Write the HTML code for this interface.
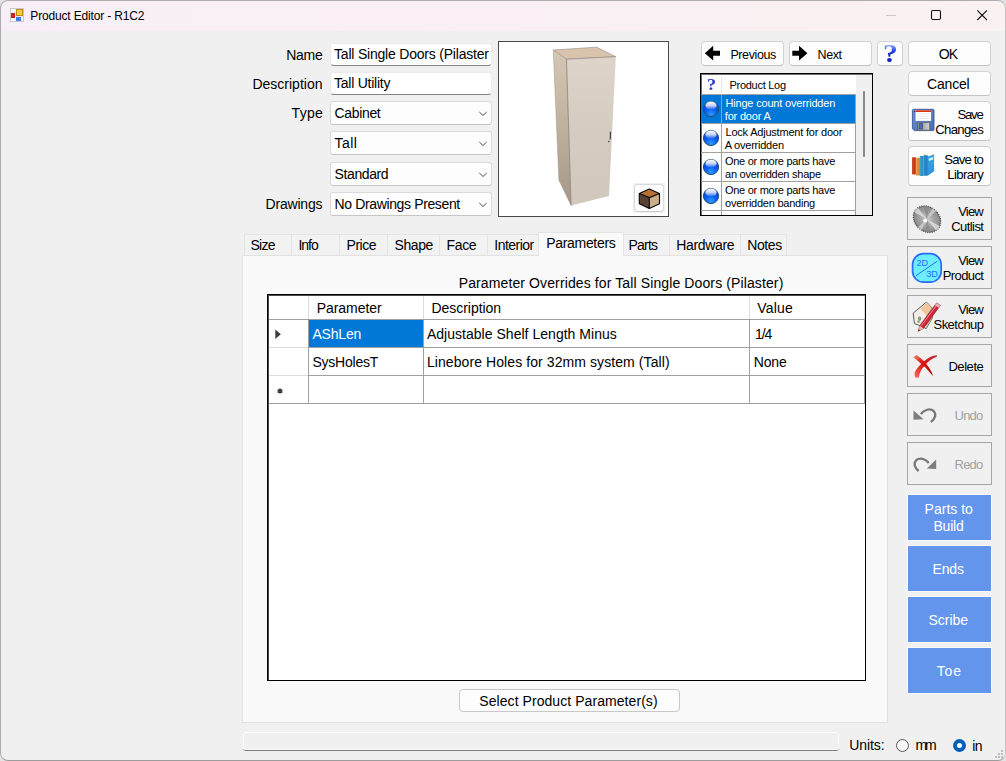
<!DOCTYPE html>
<html><head><meta charset="utf-8"><title>Product Editor - R1C2</title>
<style>
*{box-sizing:border-box;margin:0;padding:0}
html,body{width:1006px;height:761px;overflow:hidden;background:#e4e4e4}
body{font-family:"Liberation Sans",sans-serif;font-size:14px;color:#000;position:relative}
.abs{position:absolute}
.t{position:absolute;white-space:nowrap}
#win{position:absolute;left:0;top:0;width:1006px;height:761px;background:#f0f0f0;border-radius:8px;overflow:hidden}
#frame{position:absolute;left:0;top:0;width:1006px;height:761px;border:1px solid #adadad;border-right:1.5px solid #c4c4c4;border-bottom:1.5px solid #9c9c9c;border-radius:8px;pointer-events:none}
#title{position:absolute;left:0;top:0;width:1006px;height:31px;background:linear-gradient(90deg,#f8eef7 0%,#f9f0f4 60%,#faf1f1 100%)}
.tb{position:absolute;left:330px;width:162px;height:23px;background:#fff;border:1px solid #ebebeb;border-bottom:1px solid #838383;border-radius:4px;overflow:hidden}
.cb{position:absolute;left:330px;width:162px;height:24px;background:#fdfdfd;border:1px solid #dadada;border-bottom-color:#c6c6c6;border-radius:3px}
.btn{position:absolute;background:#fdfdfd;border:1px solid #d2d2d2;border-bottom-color:#c4c4c4;border-radius:4px}
.fbtn{position:absolute;left:907px;width:85px;height:43px;background:#f0f0f0;border:1px solid #a6a6a6}
.bbtn{position:absolute;left:907px;width:85px;height:47px;background:#6495ed;border:1px solid #fafafa}
.tab{position:absolute;top:234px;height:21px;background:#f2f2f2;border:1px solid #e4e4e4;border-bottom:none}
.gl{position:absolute;background:#a0a0a0}
</style></head><body>
<div id="win">
<div id="title"></div>

<span class="t" style="left:30.30px;top:7.74px;font-size:12px;line-height:16px;letter-spacing:-0.164px;">Product Editor - R1C2</span>
<svg class="abs" style="left:880px;top:5px" width="120" height="22" viewBox="0 0 120 22">
<line x1="6" y1="10.5" x2="16" y2="10.5" stroke="#cfc7cd" stroke-width="1"/>
<rect x="51.5" y="5.5" width="9" height="9" rx="1.5" fill="none" stroke="#111" stroke-width="1.1"/>
<path d="M97.3 5.3 L107 15 M107 5.3 L97.3 15" stroke="#111" stroke-width="1.1" fill="none"/>
</svg>
<svg class="abs" style="left:10px;top:8px" width="15" height="15" viewBox="0 0 15 15">
<rect x="0.5" y="0.5" width="13" height="13" fill="#f1eaf1" stroke="#c8c8c8"/><rect x="1" y="1" width="4" height="3" fill="#fff"/><rect x="1" y="11" width="4" height="2" fill="#fff"/><rect x="12" y="9" width="1" height="4" fill="#fff"/>
<rect x="1" y="5" width="4" height="5" fill="#c0281c"/>
<rect x="6.5" y="1.5" width="6" height="6" fill="#f8cc3c" stroke="#c08a10" stroke-width="1"/>
<rect x="6" y="9" width="5" height="4" fill="#3f7fe0"/>
</svg>

<span class="t" style="left:286.30px;top:46.95px;font-size:14px;line-height:16px;letter-spacing:-0.325px;">Name</span>
<span class="t" style="left:252.40px;top:75.95px;font-size:14px;line-height:16px;letter-spacing:0.010px;">Description</span>
<span class="t" style="left:291.60px;top:104.95px;font-size:14px;line-height:16px;letter-spacing:0.308px;">Type</span>
<span class="t" style="left:265.60px;top:195.65px;font-size:14px;line-height:16px;letter-spacing:-0.211px;">Drawings</span>
<div class="tb" style="top:43px"></div><div class="tb" style="top:72px"></div>
<div class="abs" style="left:331px;top:45px;width:157.6px;height:20px;overflow:hidden"><span class="t" style="left:3.00px;top:0.95px;font-size:14px;line-height:16px;letter-spacing:-0.204px;">Tall Single Doors (Pilaster)</span></div>
<span class="t" style="left:334.00px;top:74.95px;font-size:14px;line-height:16px;letter-spacing:-0.248px;">Tall Utility</span>
<div class="cb" style="top:101px"></div>
<span class="t" style="left:334.60px;top:104.65px;font-size:14px;line-height:16px;letter-spacing:-0.358px;">Cabinet</span>
<svg class="abs" style="left:478.05px;top:111.2px" width="10" height="6" viewBox="0 0 10 6"><path d="M1.3 1.0 L5.0 4.5 L8.7 1.0" fill="none" stroke="#505050" stroke-width="1"/></svg>
<div class="cb" style="top:131px"></div>
<span class="t" style="left:334.60px;top:134.65px;font-size:14px;line-height:16px;letter-spacing:0.400px;">Tall</span>
<svg class="abs" style="left:478.05px;top:141.2px" width="10" height="6" viewBox="0 0 10 6"><path d="M1.3 1.0 L5.0 4.5 L8.7 1.0" fill="none" stroke="#505050" stroke-width="1"/></svg>
<div class="cb" style="top:162px"></div>
<span class="t" style="left:334.60px;top:165.65px;font-size:14px;line-height:16px;letter-spacing:-0.402px;">Standard</span>
<svg class="abs" style="left:478.05px;top:172.2px" width="10" height="6" viewBox="0 0 10 6"><path d="M1.3 1.0 L5.0 4.5 L8.7 1.0" fill="none" stroke="#505050" stroke-width="1"/></svg>
<div class="cb" style="top:192px"></div>
<span class="t" style="left:334.60px;top:195.65px;font-size:14px;line-height:16px;letter-spacing:-0.369px;">No Drawings Present</span>
<svg class="abs" style="left:478.05px;top:202.2px" width="10" height="6" viewBox="0 0 10 6"><path d="M1.3 1.0 L5.0 4.5 L8.7 1.0" fill="none" stroke="#505050" stroke-width="1"/></svg>
<div class="abs" style="left:498px;top:41px;width:171px;height:176px;background:#fff;border:1px solid #484848"></div>
<svg class="abs" style="left:498px;top:41px" width="171" height="176" viewBox="498 41 171 176">
<defs><linearGradient id="gf" x1="0" y1="0" x2="0" y2="1"><stop offset="0" stop-color="#ded4c9"/><stop offset="0.45" stop-color="#d6cdc2"/><stop offset="1" stop-color="#d1c8bd"/></linearGradient>
<linearGradient id="gs" x1="0" y1="0" x2="0" y2="1"><stop offset="0" stop-color="#d6c7b4"/><stop offset="0.5" stop-color="#c0b19e"/><stop offset="1" stop-color="#a59786"/></linearGradient></defs>
<polygon points="553.3,50 596.7,47.2 615.8,56.7 566.5,59.2" fill="#d9c3ac" stroke="#a09890" stroke-width="0.7"/>
<polygon points="553.3,50 566.5,59.2 571.1,205.4 558.9,180.1" fill="url(#gs)" stroke="#9a9086" stroke-width="0.5"/>
<polygon points="566.5,59.2 615.8,56.7 609,196 571.1,205.4" fill="url(#gf)"/>
<path d="M566.5 59.2 L571.1 205.4" stroke="#8c857e" stroke-width="0.8" fill="none"/>
<path d="M566.5 59.2 L615.8 56.7" stroke="#9a928a" stroke-width="0.8" fill="none"/>
<path d="M610.4 131.8 L610.2 139.4" stroke="#383838" stroke-width="1.1" fill="none"/><path d="M608 141 L609.8 141 L608.6 142.6 Z" fill="#222"/>
</svg>
<div class="abs" style="left:633px;top:183px;width:32px;height:30px;background:#f0f0f0"></div>
<div class="abs" style="left:634px;top:184px;width:30px;height:28px;background:#fdfdfd;border:1px solid #dadada;border-bottom-color:#cfcfcf;border-radius:4px"></div>
<svg class="abs" style="left:636px;top:186px" width="27" height="26" viewBox="636 186 27 26">
<polygon points="649.3,189 659.5,193.5 649.3,197.6 639.3,193.5" fill="#b87333"/>
<polygon points="639.3,193.5 649.3,197.6 649.3,208.6 639.3,203.7" fill="#5c4033"/>
<polygon points="649.3,197.6 659.5,193.5 659.5,203.7 649.3,208.6" fill="#c9ae89"/>
<path d="M649.3 189 L659.5 193.5 L659.5 203.7 L649.3 208.6 L639.3 203.7 L639.3 193.5 Z M639.3 193.5 L649.3 197.6 L659.5 193.5 M649.3 197.6 V208.6" fill="none" stroke="#0a0a0a" stroke-width="1.15" stroke-linejoin="round"/>
</svg>

<div class="btn" style="left:701px;top:41px;width:83px;height:25px"></div>
<div class="btn" style="left:789px;top:41px;width:83px;height:25px"></div>
<div class="btn" style="left:877px;top:41px;width:26px;height:25px"></div>
<svg class="abs" style="left:704px;top:45px" width="18" height="17" viewBox="704 45 18 17"><path d="M704.8 53.2 L713.2 45.8 L713.2 50.7 L720 50.7 L720 55.7 L713.2 55.7 L713.2 60.6 Z" fill="#000"/></svg>
<svg class="abs" style="left:791px;top:45px" width="18" height="17" viewBox="791 45 18 17"><path d="M807.4 53.2 L799 45.8 L799 50.7 L792.3 50.7 L792.3 55.7 L799 55.7 L799 60.6 Z" fill="#000"/></svg>
<span class="t" style="left:730.40px;top:46.67px;font-size:12.5px;line-height:16px;letter-spacing:-0.389px;">Previous</span>
<span class="t" style="left:817.50px;top:46.67px;font-size:12.5px;line-height:16px;letter-spacing:-0.396px;">Next</span>
<span class="t" style="left:883px;top:39.9px;font-family:'Liberation Serif',serif;font-weight:bold;font-size:26px;line-height:28px;color:transparent;background:linear-gradient(180deg,#7c9cfc 20%,#2444ec 40%,#0a12b0 62%,#1c34d8 80%,#3a5cf0 92%);-webkit-background-clip:text;background-clip:text;transform:scaleX(1.14);transform-origin:0 0">?</span>
<div class="btn" style="left:908px;top:41px;width:83px;height:25px"></div>
<div class="btn" style="left:908px;top:71px;width:83px;height:25px"></div>
<div class="btn" style="left:908px;top:101px;width:83px;height:40px"></div>
<div class="btn" style="left:908px;top:146px;width:83px;height:40px"></div>
<span class="t" style="left:938.70px;top:45.95px;font-size:14px;line-height:16px;letter-spacing:-0.950px;">OK</span>
<span class="t" style="left:927.10px;top:75.85px;font-size:14px;line-height:16px;letter-spacing:-0.212px;">Cancel</span>
<span class="t" style="left:957.40px;top:106.63px;font-size:13.2px;line-height:16px;letter-spacing:-1.221px;">Save</span>
<span class="t" style="left:935.30px;top:121.83px;font-size:13.2px;line-height:16px;letter-spacing:-0.719px;">Changes</span>
<span class="t" style="left:944.30px;top:151.63px;font-size:13.2px;line-height:16px;letter-spacing:-0.858px;">Save to</span>
<span class="t" style="left:947.30px;top:166.83px;font-size:13.2px;line-height:16px;letter-spacing:-0.619px;">Library</span>
<svg class="abs" style="left:908px;top:100px" width="32" height="84" viewBox="908 100 32 84">
<defs>
<linearGradient id="fb" x1="0" y1="0" x2="1" y2="1"><stop offset="0" stop-color="#6a8cd0"/><stop offset="1" stop-color="#4a6cb4"/></linearGradient>
<linearGradient id="fs" x1="0" y1="0" x2="1" y2="0"><stop offset="0" stop-color="#8a8a8a"/><stop offset="0.45" stop-color="#a8a8a8"/><stop offset="1" stop-color="#d4d4d4"/></linearGradient>
<linearGradient id="b1" x1="0" y1="0" x2="1" y2="0"><stop offset="0" stop-color="#d84c30"/><stop offset="1" stop-color="#a83414"/></linearGradient>
<linearGradient id="b2" x1="0" y1="0" x2="1" y2="0"><stop offset="0" stop-color="#f8a050"/><stop offset="1" stop-color="#d87428"/></linearGradient>
<linearGradient id="b3" x1="0" y1="0" x2="1" y2="0"><stop offset="0" stop-color="#38a8d4"/><stop offset="1" stop-color="#2488bc"/></linearGradient>
<linearGradient id="b4" x1="0" y1="0" x2="1" y2="0"><stop offset="0" stop-color="#2c90d0"/><stop offset="1" stop-color="#2078c0"/></linearGradient>
<linearGradient id="b5" x1="0" y1="0" x2="0" y2="1"><stop offset="0" stop-color="#38a4e4"/><stop offset="1" stop-color="#2c94dc"/></linearGradient>
</defs>
<path d="M913.6 109.3 H932.8 Q934 109.3 934 110.5 V129.4 Q934 130.6 932.8 130.6 H914.4 L912.4 128.8 V110.5 Q912.4 109.3 913.6 109.3 Z" fill="url(#fb)" stroke="#3a5898" stroke-width="0.9"/>
<rect x="915.6" y="110.3" width="15.5" height="10.6" fill="#fefefe"/>
<rect x="915.6" y="110.3" width="15.5" height="1.7" fill="#e03212"/>
<path d="M917.2 113.7H929.6M917.2 116.2H929.6M917.2 118.5H929.6" stroke="#e2e2e6" stroke-width="0.7"/>
<rect x="914.1" y="111.1" width="1" height="1" fill="#1a1a2a"/>
<rect x="917.6" y="122.6" width="12" height="7.6" rx="0.6" fill="url(#fs)" stroke="#5a5a5a" stroke-width="0.7"/>
<rect x="919.5" y="123.7" width="3.2" height="5.2" fill="#4a6cb4" stroke="#34488a" stroke-width="0.6"/>
<!-- books -->
<rect x="912" y="157.2" width="3.9" height="17.2" rx="0.6" fill="url(#b1)"/>
<rect x="915.8" y="157.8" width="4.1" height="17.7" rx="0.6" fill="url(#b2)"/>
<rect x="919.8" y="155.9" width="3.9" height="20" rx="0.6" fill="url(#b3)"/>
<rect x="923.5" y="154.3" width="2.2" height="1.6" fill="#e4dc70"/>
<rect x="923.6" y="155.3" width="4.3" height="20.4" rx="0.6" fill="url(#b4)"/>
<polygon points="927.8,156.4 934.1,154.3 934.1,171.3 927.8,175.7" fill="url(#b5)"/>
<polygon points="928.8,158.6 933.2,157 933.2,159.4 928.8,161" fill="#c8f4fc"/>
</svg>
<svg width="0" height="0" style="position:absolute"><defs>
<radialGradient id="bg" cx="0.5" cy="0.85" r="0.8"><stop offset="0" stop-color="#2f9cff"/><stop offset="0.45" stop-color="#0a60f4"/><stop offset="1" stop-color="#0a3ad0"/></radialGradient>
<linearGradient id="bh" x1="0" y1="0" x2="0" y2="1"><stop offset="0" stop-color="#ffffff" stop-opacity="1"/><stop offset="0.5" stop-color="#ffffff" stop-opacity="0.75"/><stop offset="1" stop-color="#ffffff" stop-opacity="0"/></linearGradient>
</defs></svg>
<div class="abs" style="left:700px;top:73px;width:173px;height:143px;background:#fff;border:1px solid #000"></div><div class="abs" style="left:701px;top:74px;width:171px;height:1px;background:#707070"></div><div class="abs" style="left:701px;top:74px;width:1px;height:141px;background:#707070"></div>
<div class="abs" id="lv" style="left:701px;top:75px;width:171px;height:140px;overflow:hidden">
<div class="abs" style="left:0px;top:20px;width:154px;height:28px;background:#0078d7"></div>
<div class="gl" style="left:0;top:19px;width:154px;height:1px"></div>
<div class="gl" style="left:0;top:48px;width:154px;height:1px"></div>
<div class="gl" style="left:0;top:77px;width:154px;height:1px"></div>
<div class="gl" style="left:0;top:106px;width:154px;height:1px"></div>
<div class="gl" style="left:0;top:135px;width:154px;height:1px"></div>
<div class="gl" style="left:20px;top:19px;width:1px;height:130px"></div>
<div class="gl" style="left:154px;top:19px;width:1px;height:130px"></div>
<div class="abs" style="left:0;top:19px;width:154px;height:1px;background:#a0a0a0"></div>
<div class="abs" style="left:20px;top:2px;width:1px;height:16px;background:#e8e8e8"></div>
<span class="t" style="left:6.4px;top:1.4px;font-family:'Liberation Serif',serif;font-weight:bold;font-size:16.5px;line-height:18px;color:#2434d0;transform:scaleX(1.1);transform-origin:0 0">?</span>
<span class="t" style="left:28.50px;top:2.49px;font-size:11px;line-height:16px;letter-spacing:-0.281px;">Product Log</span>
<span class="t" style="left:24.50px;top:20.39px;font-size:11px;line-height:16px;letter-spacing:-0.188px;color:#fff;">Hinge count overridden</span>
<span class="t" style="left:23.80px;top:32.79px;font-size:11px;line-height:16px;letter-spacing:-0.194px;color:#fff;">for door A</span>
<span class="t" style="left:24.50px;top:49.39px;font-size:11px;line-height:16px;letter-spacing:-0.208px;">Lock Adjustment for door</span>
<span class="t" style="left:23.80px;top:61.99px;font-size:11px;line-height:16px;letter-spacing:-0.232px;">A overridden</span>
<span class="t" style="left:24.00px;top:78.39px;font-size:11px;line-height:16px;letter-spacing:-0.280px;">One or more parts have</span>
<span class="t" style="left:24.00px;top:90.79px;font-size:11px;line-height:16px;letter-spacing:-0.234px;">an overridden shape</span>
<span class="t" style="left:24.00px;top:107.19px;font-size:11px;line-height:16px;letter-spacing:-0.280px;">One or more parts have</span>
<span class="t" style="left:24.00px;top:119.69px;font-size:11px;line-height:16px;letter-spacing:-0.235px;">overridden banding</span>
<span class="t" style="left:24.00px;top:135.59px;font-size:11px;line-height:16px;letter-spacing:-0.280px;">One or more parts have</span>
<svg class="abs" style="left:1.2px;top:25.2px" width="18" height="18" viewBox="0 0 18 18"><circle cx="9" cy="9" r="7.6" fill="url(#bg)" stroke="#24506c" stroke-width="1"/><ellipse cx="9" cy="5.7" rx="5.6" ry="4.1" fill="url(#bh)"/></svg>
<svg class="abs" style="left:1.2px;top:54.2px" width="18" height="18" viewBox="0 0 18 18"><circle cx="9" cy="9" r="7.6" fill="url(#bg)" stroke="#24506c" stroke-width="1"/><ellipse cx="9" cy="5.7" rx="5.6" ry="4.1" fill="url(#bh)"/></svg>
<svg class="abs" style="left:1.2px;top:83.2px" width="18" height="18" viewBox="0 0 18 18"><circle cx="9" cy="9" r="7.6" fill="url(#bg)" stroke="#24506c" stroke-width="1"/><ellipse cx="9" cy="5.7" rx="5.6" ry="4.1" fill="url(#bh)"/></svg>
<svg class="abs" style="left:1.2px;top:112.2px" width="18" height="18" viewBox="0 0 18 18"><circle cx="9" cy="9" r="7.6" fill="url(#bg)" stroke="#24506c" stroke-width="1"/><ellipse cx="9" cy="5.7" rx="5.6" ry="4.1" fill="url(#bh)"/></svg>
<div class="abs" style="left:155px;top:0;width:16px;height:140px;background:#f0f0f0"></div><div class="abs" style="left:161.6px;top:16px;width:2.6px;height:66px;background:#8a8a8a;border-radius:1.3px"></div>
</div>
<div class="abs" style="left:242px;top:255px;width:646px;height:468px;background:#f9f9f9;border:1px solid #e2e2e2"></div>
<div class="tab" style="left:244px;width:48px"></div>
<div class="tab" style="left:291px;width:49px"></div>
<div class="tab" style="left:339px;width:49px"></div>
<div class="tab" style="left:387px;width:53px"></div>
<div class="tab" style="left:439px;width:49px"></div>
<div class="tab" style="left:487px;width:52px"></div>
<div class="tab" style="left:623px;width:47px"></div>
<div class="tab" style="left:669px;width:72px"></div>
<div class="tab" style="left:740px;width:47px"></div>
<div class="tab" style="left:538px;top:232px;width:86px;height:24px;background:#f9f9f9"></div>
<span class="t" style="left:250.40px;top:236.85px;font-size:14px;line-height:16px;letter-spacing:-0.683px;">Size</span>
<span class="t" style="left:298.40px;top:236.85px;font-size:14px;line-height:16px;letter-spacing:-0.992px;">Info</span>
<span class="t" style="left:346.60px;top:236.85px;font-size:14px;line-height:16px;letter-spacing:-0.519px;">Price</span>
<span class="t" style="left:394.50px;top:236.85px;font-size:14px;line-height:16px;letter-spacing:-0.400px;">Shape</span>
<span class="t" style="left:446.50px;top:236.85px;font-size:14px;line-height:16px;letter-spacing:-0.342px;">Face</span>
<span class="t" style="left:494.30px;top:236.85px;font-size:14px;line-height:16px;letter-spacing:-0.537px;">Interior</span>
<span class="t" style="left:546.20px;top:234.85px;font-size:14px;line-height:16px;letter-spacing:-0.308px;">Parameters</span>
<span class="t" style="left:628.50px;top:236.85px;font-size:14px;line-height:16px;letter-spacing:-0.772px;">Parts</span>
<span class="t" style="left:676.20px;top:236.85px;font-size:14px;line-height:16px;letter-spacing:-0.341px;">Hardware</span>
<span class="t" style="left:747.20px;top:236.85px;font-size:14px;line-height:16px;letter-spacing:-0.391px;">Notes</span>
<span class="t" style="left:458.70px;top:275.25px;font-size:14px;line-height:16px;letter-spacing:0.115px;">Parameter Overrides for Tall Single Doors (Pilaster)</span>
<div class="abs" style="left:267px;top:294px;width:599px;height:387px;background:#fff;border:1px solid #000"></div><div class="abs" style="left:268px;top:295px;width:597px;height:1px;background:#4a4a4a"></div><div class="abs" style="left:268px;top:295px;width:1px;height:385px;background:#4a4a4a"></div>
<div class="abs" style="left:269px;top:319px;width:596px;height:1px;background:#a0a0a0"></div>
<div class="abs" style="left:269px;top:347px;width:596px;height:1px;background:#a0a0a0"></div>
<div class="abs" style="left:269px;top:375px;width:596px;height:1px;background:#a0a0a0"></div>
<div class="abs" style="left:269px;top:403px;width:596px;height:1px;background:#a0a0a0"></div>
<div class="abs" style="left:308px;top:320px;width:1px;height:84px;background:#a0a0a0"></div>
<div class="abs" style="left:308px;top:296px;width:1px;height:23px;background:#dcdcdc"></div>
<div class="abs" style="left:423px;top:320px;width:1px;height:84px;background:#a0a0a0"></div>
<div class="abs" style="left:423px;top:296px;width:1px;height:23px;background:#dcdcdc"></div>
<div class="abs" style="left:749px;top:320px;width:1px;height:84px;background:#a0a0a0"></div>
<div class="abs" style="left:749px;top:296px;width:1px;height:23px;background:#dcdcdc"></div>
<div class="abs" style="left:864px;top:320px;width:1px;height:84px;background:#a0a0a0"></div>
<div class="abs" style="left:864px;top:296px;width:1px;height:23px;background:#dcdcdc"></div>
<div class="abs" style="left:269px;top:347px;width:39px;height:1px;background:#dcdcdc"></div>
<div class="abs" style="left:269px;top:375px;width:39px;height:1px;background:#dcdcdc"></div>
<div class="abs" style="left:309px;top:320px;width:114px;height:27px;background:#0078d7"></div>
<span class="t" style="left:316.70px;top:300.25px;font-size:14px;line-height:16px;letter-spacing:-0.034px;">Parameter</span>
<span class="t" style="left:431.50px;top:300.25px;font-size:14px;line-height:16px;letter-spacing:-0.040px;">Description</span>
<span class="t" style="left:757.30px;top:300.25px;font-size:14px;line-height:16px;letter-spacing:0.163px;">Value</span>
<span class="t" style="left:312.40px;top:326.05px;font-size:14px;line-height:16px;letter-spacing:-0.163px;color:#fff;">AShLen</span>
<span class="t" style="left:312.40px;top:353.85px;font-size:14px;line-height:16px;letter-spacing:-0.223px;">SysHolesT</span>
<span class="t" style="left:426.90px;top:326.05px;font-size:14px;line-height:16px;letter-spacing:0.028px;">Adjustable Shelf Length Minus</span>
<span class="t" style="left:426.90px;top:353.85px;font-size:14px;line-height:16px;letter-spacing:0.085px;">Linebore Holes for 32mm system (Tall)</span>
<span class="t" style="left:755.10px;top:325.75px;font-size:14px;line-height:16px;letter-spacing:-1.169px;">1/4</span>
<span class="t" style="left:753.80px;top:353.85px;font-size:14px;line-height:16px;letter-spacing:-0.167px;">None</span>
<svg class="abs" style="left:275px;top:329px" width="7" height="11" viewBox="0 0 7 11"><path d="M0.3 0.6 L5.8 5.3 L0.3 10 Z" fill="#3c3c3c"/></svg>
<svg class="abs" style="left:276px;top:387px" width="8" height="8" viewBox="0 0 8 8"><path d="M4 1.4 V6.6 M1.6 2.6 L6.4 5.4 M6.4 2.6 L1.6 5.4" stroke="#3c3c3c" stroke-width="1.6" fill="none"/></svg>
<div class="btn" style="left:459px;top:689px;width:221px;height:23px;border-color:#c8c8c8"></div>
<span class="t" style="left:479.30px;top:692.75px;font-size:14px;line-height:16px;letter-spacing:0.064px;">Select Product Parameter(s)</span>
<div class="fbtn" style="top:197px"></div>
<div class="fbtn" style="top:246px"></div>
<div class="fbtn" style="top:295px"></div>
<div class="fbtn" style="top:344px"></div>
<div class="fbtn" style="top:393px"></div>
<div class="fbtn" style="top:442px"></div>
<span class="t" style="left:958.20px;top:203.70px;font-size:13px;line-height:16px;letter-spacing:-0.800px;">View</span>
<span class="t" style="left:951.20px;top:218.70px;font-size:13px;line-height:16px;letter-spacing:-0.554px;">Cutlist</span>
<span class="t" style="left:958.20px;top:252.50px;font-size:13px;line-height:16px;letter-spacing:-0.800px;">View</span>
<span class="t" style="left:942.70px;top:267.70px;font-size:13px;line-height:16px;letter-spacing:-0.585px;">Product</span>
<span class="t" style="left:958.20px;top:301.70px;font-size:13px;line-height:16px;letter-spacing:-0.800px;">View</span>
<span class="t" style="left:933.50px;top:316.70px;font-size:13px;line-height:16px;letter-spacing:-0.527px;">Sketchup</span>
<span class="t" style="left:948.40px;top:358.50px;font-size:13px;line-height:16px;letter-spacing:-0.433px;">Delete</span>
<span class="t" style="left:954.50px;top:407.50px;font-size:13px;line-height:16px;letter-spacing:-0.754px;color:#a2a2a2;">Undo</span>
<span class="t" style="left:954.50px;top:456.50px;font-size:13px;line-height:16px;letter-spacing:-0.754px;color:#a2a2a2;">Redo</span>
<svg class="abs" style="left:900px;top:190px" width="100" height="300" viewBox="900 190 100 300">
<defs>
<radialGradient id="sg" cx="0.5" cy="0.5" r="0.5"><stop offset="0" stop-color="#c8c8c8"/><stop offset="0.6" stop-color="#a2a2a2"/><stop offset="1" stop-color="#8e8e8e"/></radialGradient>
<clipPath id="sc"><ellipse cx="0" cy="0" rx="14.6" ry="12"/></clipPath>
<linearGradient id="xg1" x1="0" y1="0" x2="1" y2="1"><stop offset="0" stop-color="#ff9080"/><stop offset="0.35" stop-color="#e01c14"/><stop offset="1" stop-color="#a80c0c"/></linearGradient>
<linearGradient id="xg2" x1="1" y1="0" x2="0" y2="1"><stop offset="0" stop-color="#c83040"/><stop offset="0.5" stop-color="#d81010"/><stop offset="1" stop-color="#ff7060"/></linearGradient>
</defs>
<!-- saw -->
<g transform="translate(927,219.2) rotate(40)">
<ellipse cx="0" cy="0" rx="14.6" ry="12.1" fill="#6a6a6a" stroke="#5a5a5a" stroke-width="1.4" stroke-dasharray="1.1 1.1"/>
<ellipse cx="0" cy="0" rx="13.8" ry="11.3" fill="url(#sg)"/>
<g clip-path="url(#sc)" opacity="0.75">
<path d="M0 0 L-20 -4 L-20 4 Z" fill="#e4e4e4"/><path d="M0 0 L20 -4 L20 4 Z" fill="#e4e4e4"/>
<path d="M0 0 L-5 -20 L3 -20 Z" fill="#d4d4d4"/><path d="M0 0 L5 20 L-3 20 Z" fill="#d4d4d4"/>
<path d="M0 0 L-20 -14 L-12 -20 Z" fill="#888"/><path d="M0 0 L20 14 L12 20 Z" fill="#888"/>
</g>
</g>
<circle cx="925.2" cy="220.6" r="1.9" fill="#fff"/>
<!-- 2D/3D -->
<rect x="912.6" y="253.6" width="28.6" height="28.6" rx="11" fill="#6ceeff" stroke="#2a6cff" stroke-width="1.7"/>
<line x1="916" y1="275.7" x2="937" y2="261.3" stroke="#2a6cff" stroke-width="1"/>
<text x="916.4" y="265.7" font-family="Liberation Sans, sans-serif" font-size="9.2" fill="#2a6cff">2D</text>
<text x="926.2" y="277" font-family="Liberation Sans, sans-serif" font-size="9.2" fill="#2a6cff">3D</text>
<!-- sketchup -->
<polygon points="913.2,313.1 926.5,302.1 932,307.9 932.3,318.1 926.2,328.6 918.5,325 914.4,323.6" fill="#f4ece6" stroke="#4a4a44" stroke-width="0.9" stroke-linejoin="round"/>
<polygon points="920.6,309.2 926.5,302.3 931.8,307.9 926.4,315.2" fill="#f3c59c"/>
<polygon points="926.4,315.2 931.8,307.9 932.2,318 926.2,328.2" fill="#c8b8a4"/>
<ellipse cx="919.6" cy="318.6" rx="1.6" ry="2.2" fill="#7aa07a"/><ellipse cx="918.6" cy="321.6" rx="1.4" ry="1.4" fill="#88a888"/>
<polygon points="918.2,331.3 919.8,325.6 936.6,302.9 940.4,305.4 923.4,328.4" fill="#d42436" stroke="#7a2028" stroke-width="0.6"/>
<path d="M921.4 325.6 L937.4 304.2" stroke="#f4909c" stroke-width="1"/>
<polygon points="936.6,302.9 940.4,305.4 938.6,307.8 934.9,305.2" fill="#eeb0b8"/>
<polygon points="918.2,331.3 919.8,325.6 923.4,328.4" fill="#e8b8b0"/><polygon points="918.2,331.3 918.8,329.2 920.2,330.2" fill="#402020"/>
<!-- delete -->
<path d="M913.2 357.2 L916.6 355 C921 358 925 362 927.5 365.5 C930 369 932.4 372.5 932.9 375.9 C931.5 374.5 928.5 370.5 925.4 367.4 C921 363.6 917 360 913.2 357.2 Z" fill="url(#xg1)"/>
<path d="M937 355.2 L936.8 356.8 C932 358.2 927.8 362 925.2 365 C921.7 368.6 919.6 372 918.8 377.4 L915.6 377.8 C914 375 914.2 372.8 916 370 C918.6 366 923 361.6 928 358.2 C931 356.2 934 355.2 937 355.2 Z" fill="url(#xg2)"/>
<!-- undo -->
<polygon points="913.5,410.4 913.5,419.8 923.5,419.2" fill="#7e7e7e"/>
<path d="M920.8 414.2 C924 409.6 930 408 933.6 411 C936.6 414 935.4 418.6 930.9 422" fill="none" stroke="#787878" stroke-width="2.3"/>
<!-- redo -->
<polygon points="936.2,459.5 936.2,468.9 926.8,468.4" fill="#7e7e7e"/>
<path d="M928.8 463 C925.6 458.6 919.6 457.2 916.2 460.2 C913.4 463.2 914.4 467.6 918.6 471" fill="none" stroke="#787878" stroke-width="2.3"/>
</svg>
<div class="bbtn" style="top:494px"></div>
<div class="bbtn" style="top:545px"></div>
<div class="bbtn" style="top:596px"></div>
<div class="bbtn" style="top:647px"></div>
<span class="t" style="left:924.60px;top:501.15px;font-size:14px;line-height:16px;letter-spacing:0.007px;color:#fff;">Parts to</span>
<span class="t" style="left:933.50px;top:517.85px;font-size:14px;line-height:16px;letter-spacing:-0.231px;color:#fff;">Build</span>
<span class="t" style="left:932.60px;top:561.15px;font-size:14px;line-height:16px;letter-spacing:-0.179px;color:#fff;">Ends</span>
<span class="t" style="left:928.40px;top:612.05px;font-size:14px;line-height:16px;letter-spacing:0.003px;color:#fff;">Scribe</span>
<span class="t" style="left:936.70px;top:662.95px;font-size:14px;line-height:16px;letter-spacing:0.919px;color:#fff;">Toe</span>
<div class="abs" style="left:243px;top:732px;width:596px;height:19px;background:#7c7c7c;border-radius:3px"></div><div class="abs" style="left:243px;top:732px;width:596px;height:18px;background:#f0f0f0;border:1px solid #fdfdfd;border-radius:2px"></div>
<span class="t" style="left:849.30px;top:737.35px;font-size:14px;line-height:16px;letter-spacing:-0.082px;">Units:</span>
<span class="t" style="left:915.50px;top:737.35px;font-size:14px;line-height:16px;letter-spacing:-2.212px;">mm</span>
<span class="t" style="left:972.20px;top:737.75px;font-size:14px;line-height:16px;letter-spacing:-0.575px;">in</span>
<div class="abs" style="left:896px;top:739px;width:13px;height:13px;border:1px solid #5a5a5a;border-radius:50%;background:#f6f6f6"></div>
<div class="abs" style="left:953px;top:739px;width:13px;height:13px;border:4px solid #0560b8;border-radius:50%;background:#fff"></div>
<div class="abs" style="left:1001px;top:750px;width:2px;height:2px;background:#bdbdbd"></div>
<div class="abs" style="left:998px;top:753px;width:2px;height:2px;background:#bdbdbd"></div>
<div class="abs" style="left:1001px;top:753px;width:2px;height:2px;background:#bdbdbd"></div>
<div class="abs" style="left:995px;top:756px;width:2px;height:2px;background:#bdbdbd"></div>
<div class="abs" style="left:998px;top:756px;width:2px;height:2px;background:#bdbdbd"></div>
<div class="abs" style="left:1001px;top:756px;width:2px;height:2px;background:#bdbdbd"></div>
</div>
<div id="frame"></div>
</body></html>
